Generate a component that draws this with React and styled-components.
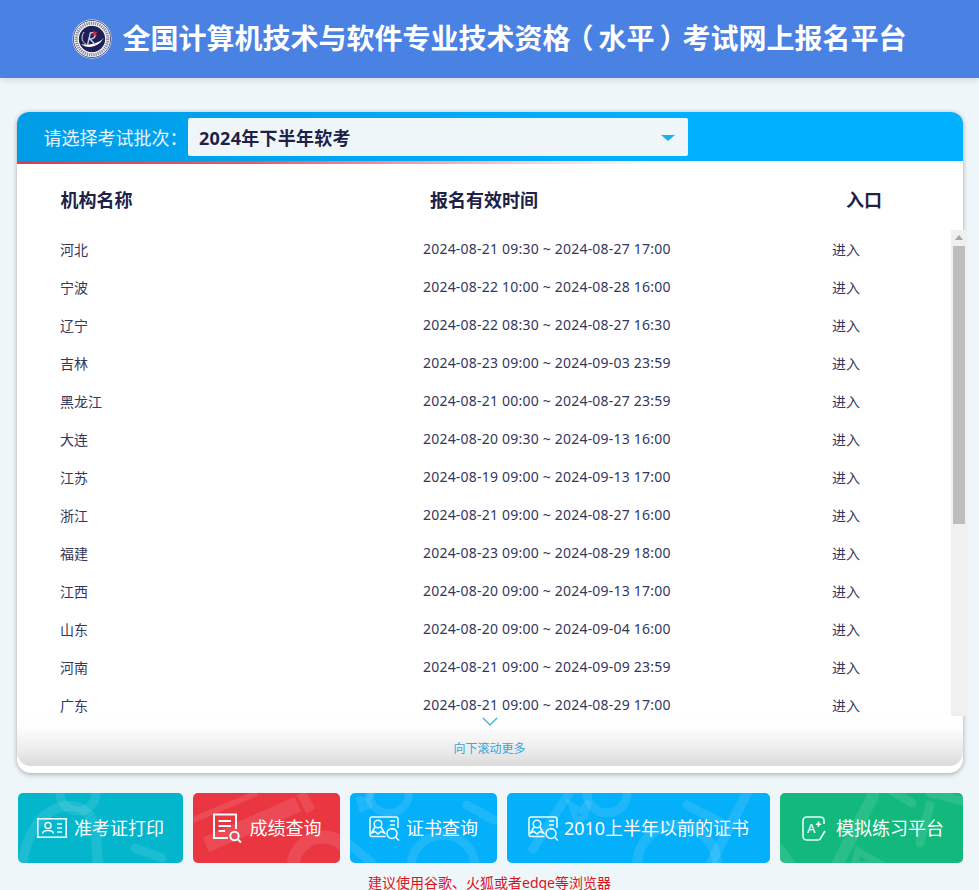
import React from 'react';
import styled, { createGlobalStyle } from 'styled-components';

const FONT = '"Noto Sans", "Noto Sans CJK SC", sans-serif';

const Global = createGlobalStyle`
  html, body { margin: 0; padding: 0; background: #eff6f9; }
  body { font-family: ${FONT}; color: #2c2f52; }
  #root { height: 100vh; overflow: hidden; }
  * { box-sizing: border-box; }
`;

const Header = styled.header`
  height: 78px;
  background: #4a82e4;
  box-shadow: 0 2px 6px rgba(0, 0, 0, 0.12);
  display: flex;
  align-items: center;
  justify-content: center;
  gap: 10px;
`;
const Title = styled.h1`
  margin: -3px 0 0;
  font-size: 28px;
  line-height: 40px;
  font-weight: 700;
  color: #fff;
  white-space: nowrap;
  text-spacing-trim: space-all;
`;
const TitleParen = styled.span`
  display: inline-block;
  width: 28px;
  transform: translateX(${(p) => p.$dx}px);
`;
const Card = styled.section`
  margin: 34px 16px 0 17px;
  height: 660.5px;
  background: #fff;
  border-radius: 12px 12px 14px 14px;
  box-shadow: 0 1px 5px rgba(0, 0, 0, 0.32), 0 10px 8px -4px rgba(0, 0, 0, 0.02);
`;
const BatchBar = styled.div`
  height: 49px;
  border-radius: 12px 12px 0 0;
  background: linear-gradient(90deg, #019ce6 0%, #00a8f5 40%, #00b1ff 65%);
  display: flex;
  align-items: flex-start;
  padding: 6px 0 0 27px;
`;
const BatchLabel = styled.span`
  font-size: 18px;
  line-height: 40px;
  color: #e6f5fd;
  width: 144px;
  margin-left: -0.5px;
  margin-right: 0.5px;
  white-space: nowrap;
`;
const Select = styled.div`
  width: 500px;
  height: 38px;
  border-radius: 2px;
  background: #eff6f9;
  display: flex;
  align-items: center;
  justify-content: space-between;
  padding: 0 13px 0 11px;
  font-size: 18px;
  font-weight: 700;
  letter-spacing: 0.25px;
  color: #1f2147;
`;
const Caret = styled.i`
  display: block;
  width: 0;
  height: 0;
  margin-top: 2px;
  border-left: 7px solid transparent;
  border-right: 7px solid transparent;
  border-top: 6px solid #16b2f2;
`;
const RedRule = styled.div`
  height: 3px;
  background: linear-gradient(90deg, #e13c48 0%, #ea5a64 25%, #f8c4c8 52%, #ffffff 68%);
`;
const HeadRow = styled.div`
  height: 66px;
  padding: 24px 0 0 43.5px;
  display: grid;
  grid-template-columns: 369.5px 416px auto;
  justify-content: start;
  font-size: 18px;
  line-height: 24px;
  font-weight: 700;
  color: #1f2147;
`;
const ScrollArea = styled.div`
  position: relative;
  width: 950px;
  height: 486px;
`;
const List = styled.div`
  height: 100%;
  overflow: hidden;
`;
const ScrollBar = styled.div`
  position: absolute;
  top: 0;
  right: 0;
  bottom: 0;
  width: 16px;
  background: #f0f0f0;
  display: flex;
  flex-direction: column;
  align-items: center;
`;
const ScrollArrow = styled.i`
  display: block;
  flex: none;
  width: 0;
  height: 0;
  margin-top: 5px;
  margin-bottom: 6px;
  border-left: 4px solid transparent;
  border-right: 4px solid transparent;
  border-bottom: 5px solid #a6a6a6;
`;
const ScrollThumb = styled.div`
  width: 12px;
  height: 278px;
  background: #bdbdbd;
`;
const Row = styled.div`
  height: 38px;
  padding-left: 43px;
  display: grid;
  grid-template-columns: 363px 409px auto;
  justify-content: start;
  align-items: center;
  font-size: 14px;
  color: #34375c;
`;
const Period = styled.span`
  letter-spacing: 0.21px;
  white-space: nowrap;
  margin-top: -2px;
`;
const EnterLink = styled.a`
  color: inherit;
  text-decoration: none;
`;
const MoreBar = styled.div`
  width: 946px;
  height: 50px;
  border-radius: 0 0 14px 14px;
  background: linear-gradient(180deg, #ffffff 0%, #fdfdfd 25%, #ebebeb 70%, #dadada 100%);
  display: flex;
  flex-direction: column;
  align-items: center;
`;
const MoreLabel = styled.span`
  margin-top: 14px;
  margin-left: -1px;
  font-size: 12px;
  line-height: 18px;
  color: #39a5dc;
`;
const Actions = styled.nav`
  margin: 20.5px 16px 0 18px;
  display: flex;
  gap: 10px;
`;
const Action = styled.a`
  position: relative;
  overflow: hidden;
  width: ${(p) => p.$w}px;
  height: 70px;
  border-radius: 5px;
  background: ${(p) => p.$bg};
  color: #fff;
  display: flex;
  align-items: center;
  justify-content: center;
  gap: ${(p) => p.$gap}px;
  padding-left: ${(p) => p.$pad || 0}px;
  font-size: 18px;
  text-decoration: none;
  white-space: nowrap;
`;
const Decor = styled.svg`
  position: absolute;
  inset: 0;
  fill: none;
  stroke: rgba(255, 255, 255, 0.1);
  stroke-linecap: round;
`;
const ActionText = styled.span`
  position: relative;
  line-height: 24px;
`;
const ActionIcon = styled.svg`
  position: relative;
  flex: none;
  fill: none;
  stroke: #e8fbfd;
  stroke-width: 1.6;
  overflow: visible;
`;
const Notice = styled.p`
  margin: 10px 0 0;
  text-align: center;
  font-size: 14px;
  line-height: 20px;
  color: #d9141c;
`;

const Logo = () => (
  <svg width="40" height="40" viewBox="0 0 40 40">
    <circle cx="20" cy="20" r="19.5" fill="#fff" />
    <circle cx="20" cy="20" r="18.6" fill="none" stroke="#2d2c5c" strokeWidth="0.8" />
    <circle cx="20" cy="20" r="15.8" fill="none" stroke="#3a3a6a" strokeWidth="3.2" strokeDasharray="1.4 0.8" opacity="0.6" />
    <circle cx="20" cy="20" r="13.2" fill="#1d1f55" />
    <path d="M9 25C15 30 27 29 32 18C29 24 17 27 9 25Z" fill="#fff" />
    <path d="M12 13C8 19 11 24 14 25" fill="none" stroke="#d5d6e6" strokeWidth="1" />
    <path d="M15.5 26L18.5 13.5M18 14C25 12 25 19 18 20L23.5 26" fill="none" stroke="#c9cae0" strokeWidth="1.4" />
    <path d="M21.5 10.5L23 13L25.5 12.8L24 15L25 17L22.5 16L20.5 17L21 14.5Z" fill="#d8242f" />
  </svg>
);

const ExamCard = () => (
  <ActionIcon width="30" height="20" viewBox="0 0 30 20">
    <rect x="0.8" y="0.8" width="28.4" height="18.4" />
    <circle cx="11" cy="7.5" r="3" />
    <path d="M5.5 15.5C6 11.5 16 11.5 16.5 15.5" />
    <path d="M20 6H25M20 10H25M20 14H25" />
  </ActionIcon>
);
const ScoreDoc = () => (
  <ActionIcon width="30" height="30" viewBox="0 0 30 30" style={{ strokeWidth: 2 }}>
    <path d="M16 25H2V1.5H24V16" />
    <path d="M6.5 8H19M6.5 13H19M6.5 18H13" />
    <circle cx="22.5" cy="23" r="4.2" />
    <path d="M25.5 26L29 29.5" />
  </ActionIcon>
);
const CertSearch = () => (
  <ActionIcon width="30" height="25" viewBox="0 0 30 25">
    <path d="M16.5 20.5H3Q1 20.5 1 18V3Q1 1 3 1H27Q29 1 29 3V12" />
    <circle cx="9" cy="8" r="3.8" />
    <path d="M6 11L2.5 17L6 15.5L9 18L12 15.5L15.5 17L12 11" />
    <path d="M21 5H26M21 9H26M22 13H26" />
    <circle cx="23" cy="17.5" r="5" />
    <path d="M26.5 21L30 24.5" />
  </ActionIcon>
);
const PracticeIcon = () => (
  <ActionIcon width="24" height="25" viewBox="0 0 24 25">
    <path d="M17 24H5Q1 24 1 20V5Q1 1 5 1H18Q22 1 22 5V8" />
    <path d="M17.5 24L23 15" />
    <text x="5" y="17" fontFamily="Noto Sans, sans-serif" fontSize="13" fontWeight="500" fill="#e8fbfd" stroke="none">A</text>
    <path d="M16.5 5.5V11M13.8 8.2H19.2" />
  </ActionIcon>
);

const decors = {
  exam: (
    <>
      <circle cx="60" cy="0" r="18" strokeWidth="9" />
      <path d="M4 72C8 40 24 18 44 14C62 10 76 20 78 40L80 72" strokeWidth="10" />
      <path d="M117 55L144 65" strokeWidth="9" />
    </>
  ),
  score: (
    <>
      <path d="M13 52L105 11" strokeWidth="16" strokeLinecap="butt" />
      <path d="M0 27L64 0" strokeWidth="6" strokeLinecap="butt" />
      <path d="M108 0L118 18" strokeWidth="10" strokeLinecap="butt" />
      <circle cx="130" cy="74" r="30" strokeWidth="13" />
    </>
  ),
  cert: (
    <>
      <path d="M9 6L18 8L22 0M9 6L12 16L20 12" strokeWidth="6" />
      <circle cx="39" cy="0" r="20" strokeWidth="8" />
      <path d="M117 12L144 27" strokeWidth="9" />
      <circle cx="93" cy="74" r="32" strokeWidth="9" />
      <path d="M0 52L22 70" strokeWidth="9" />
    </>
  ),
  old: (
    <>
      <path d="M26 56L62 0" strokeWidth="9" />
      <path d="M64 12L74 18L82 8L78 24L70 28Z" strokeWidth="6" />
      <circle cx="100" cy="0" r="20" strokeWidth="9" />
      <path d="M180 12L213 29" strokeWidth="9" />
      <circle cx="170" cy="72" r="40" strokeWidth="10" />
      <path d="M203 72L240 0" strokeWidth="10" />
    </>
  ),
  practice: (
    <>
      <path d="M0 56L12 74" strokeWidth="10" />
      <path d="M57 72L93 3" strokeWidth="12" />
      <path d="M78 58L102 72H74Z" strokeWidth="7" />
      <path d="M112 -2L132 10M150 12L140 50M150 0L183 8" strokeWidth="9" />
    </>
  ),
};

const actions = [
  { key: 'exam', w: 165, gap: 7, bg: '#03b6cc', text: '准考证打印', icon: <ExamCard /> },
  { key: 'score', w: 147, gap: 8, bg: '#ea3641', text: '成绩查询', icon: <ScoreDoc /> },
  { key: 'cert', w: 147, gap: 7, bg: '#05b0fa', text: '证书查询', icon: <CertSearch /> },
  { key: 'old', w: 263, gap: 6, bg: '#05b0fa', text: '2010上半年以前的证书', icon: <CertSearch /> },
  { key: 'practice', w: 183, gap: 10, pad: 3, bg: '#12b87c', text: '模拟练习平台', icon: <PracticeIcon /> },
];

const rows = [
  ['河北', '2024-08-21 09:30 ~ 2024-08-27 17:00'],
  ['宁波', '2024-08-22 10:00 ~ 2024-08-28 16:00'],
  ['辽宁', '2024-08-22 08:30 ~ 2024-08-27 16:30'],
  ['吉林', '2024-08-23 09:00 ~ 2024-09-03 23:59'],
  ['黑龙江', '2024-08-21 00:00 ~ 2024-08-27 23:59'],
  ['大连', '2024-08-20 09:30 ~ 2024-09-13 16:00'],
  ['江苏', '2024-08-19 09:00 ~ 2024-09-13 17:00'],
  ['浙江', '2024-08-21 09:00 ~ 2024-08-27 16:00'],
  ['福建', '2024-08-23 09:00 ~ 2024-08-29 18:00'],
  ['江西', '2024-08-20 09:00 ~ 2024-09-13 17:00'],
  ['山东', '2024-08-20 09:00 ~ 2024-09-04 16:00'],
  ['河南', '2024-08-21 09:00 ~ 2024-09-09 23:59'],
  ['广东', '2024-08-21 09:00 ~ 2024-08-29 17:00'],
];

export default function App() {
  return (
    <>
      <Global />
      <Header>
        <Logo />
        <Title>
          全国计算机技术与软件专业技术资格
          <TitleParen $dx={-5}>（</TitleParen>
          水平
          <TitleParen $dx={5}>）</TitleParen>
          考试网上报名平台
        </Title>
      </Header>
      <Card>
        <BatchBar>
          <BatchLabel>请选择考试批次：</BatchLabel>
          <Select>
            2024年下半年软考
            <Caret />
          </Select>
        </BatchBar>
        <RedRule />
        <HeadRow>
          <span>机构名称</span>
          <span>报名有效时间</span>
          <span>入口</span>
        </HeadRow>
        <ScrollArea>
          <List>
            {rows.map(([name, period]) => (
              <Row key={name}>
                <span>{name}</span>
                <Period>{period}</Period>
                <EnterLink href="#">进入</EnterLink>
              </Row>
            ))}
          </List>
          <ScrollBar>
            <ScrollArrow />
            <ScrollThumb />
          </ScrollBar>
        </ScrollArea>
        <MoreBar>
          <svg width="16" height="9" viewBox="0 0 16 9" style={{ marginTop: 1 }}>
            <path d="M1 1L8 8L15 1" fill="none" stroke="#2fa8dc" strokeWidth="1.2" />
          </svg>
          <MoreLabel>向下滚动更多</MoreLabel>
        </MoreBar>
      </Card>
      <Actions>
        {actions.map((a) => (
          <Action key={a.key} href="#" $w={a.w} $bg={a.bg} $gap={a.gap} $pad={a.pad}>
            <Decor width={a.w} height="70" viewBox={`0 0 ${a.w} 70`}>{decors[a.key]}</Decor>
            {a.icon}
            <ActionText>{a.text}</ActionText>
          </Action>
        ))}
      </Actions>
      <Notice>建议使用谷歌、火狐或者edge等浏览器</Notice>
    </>
  );
}
